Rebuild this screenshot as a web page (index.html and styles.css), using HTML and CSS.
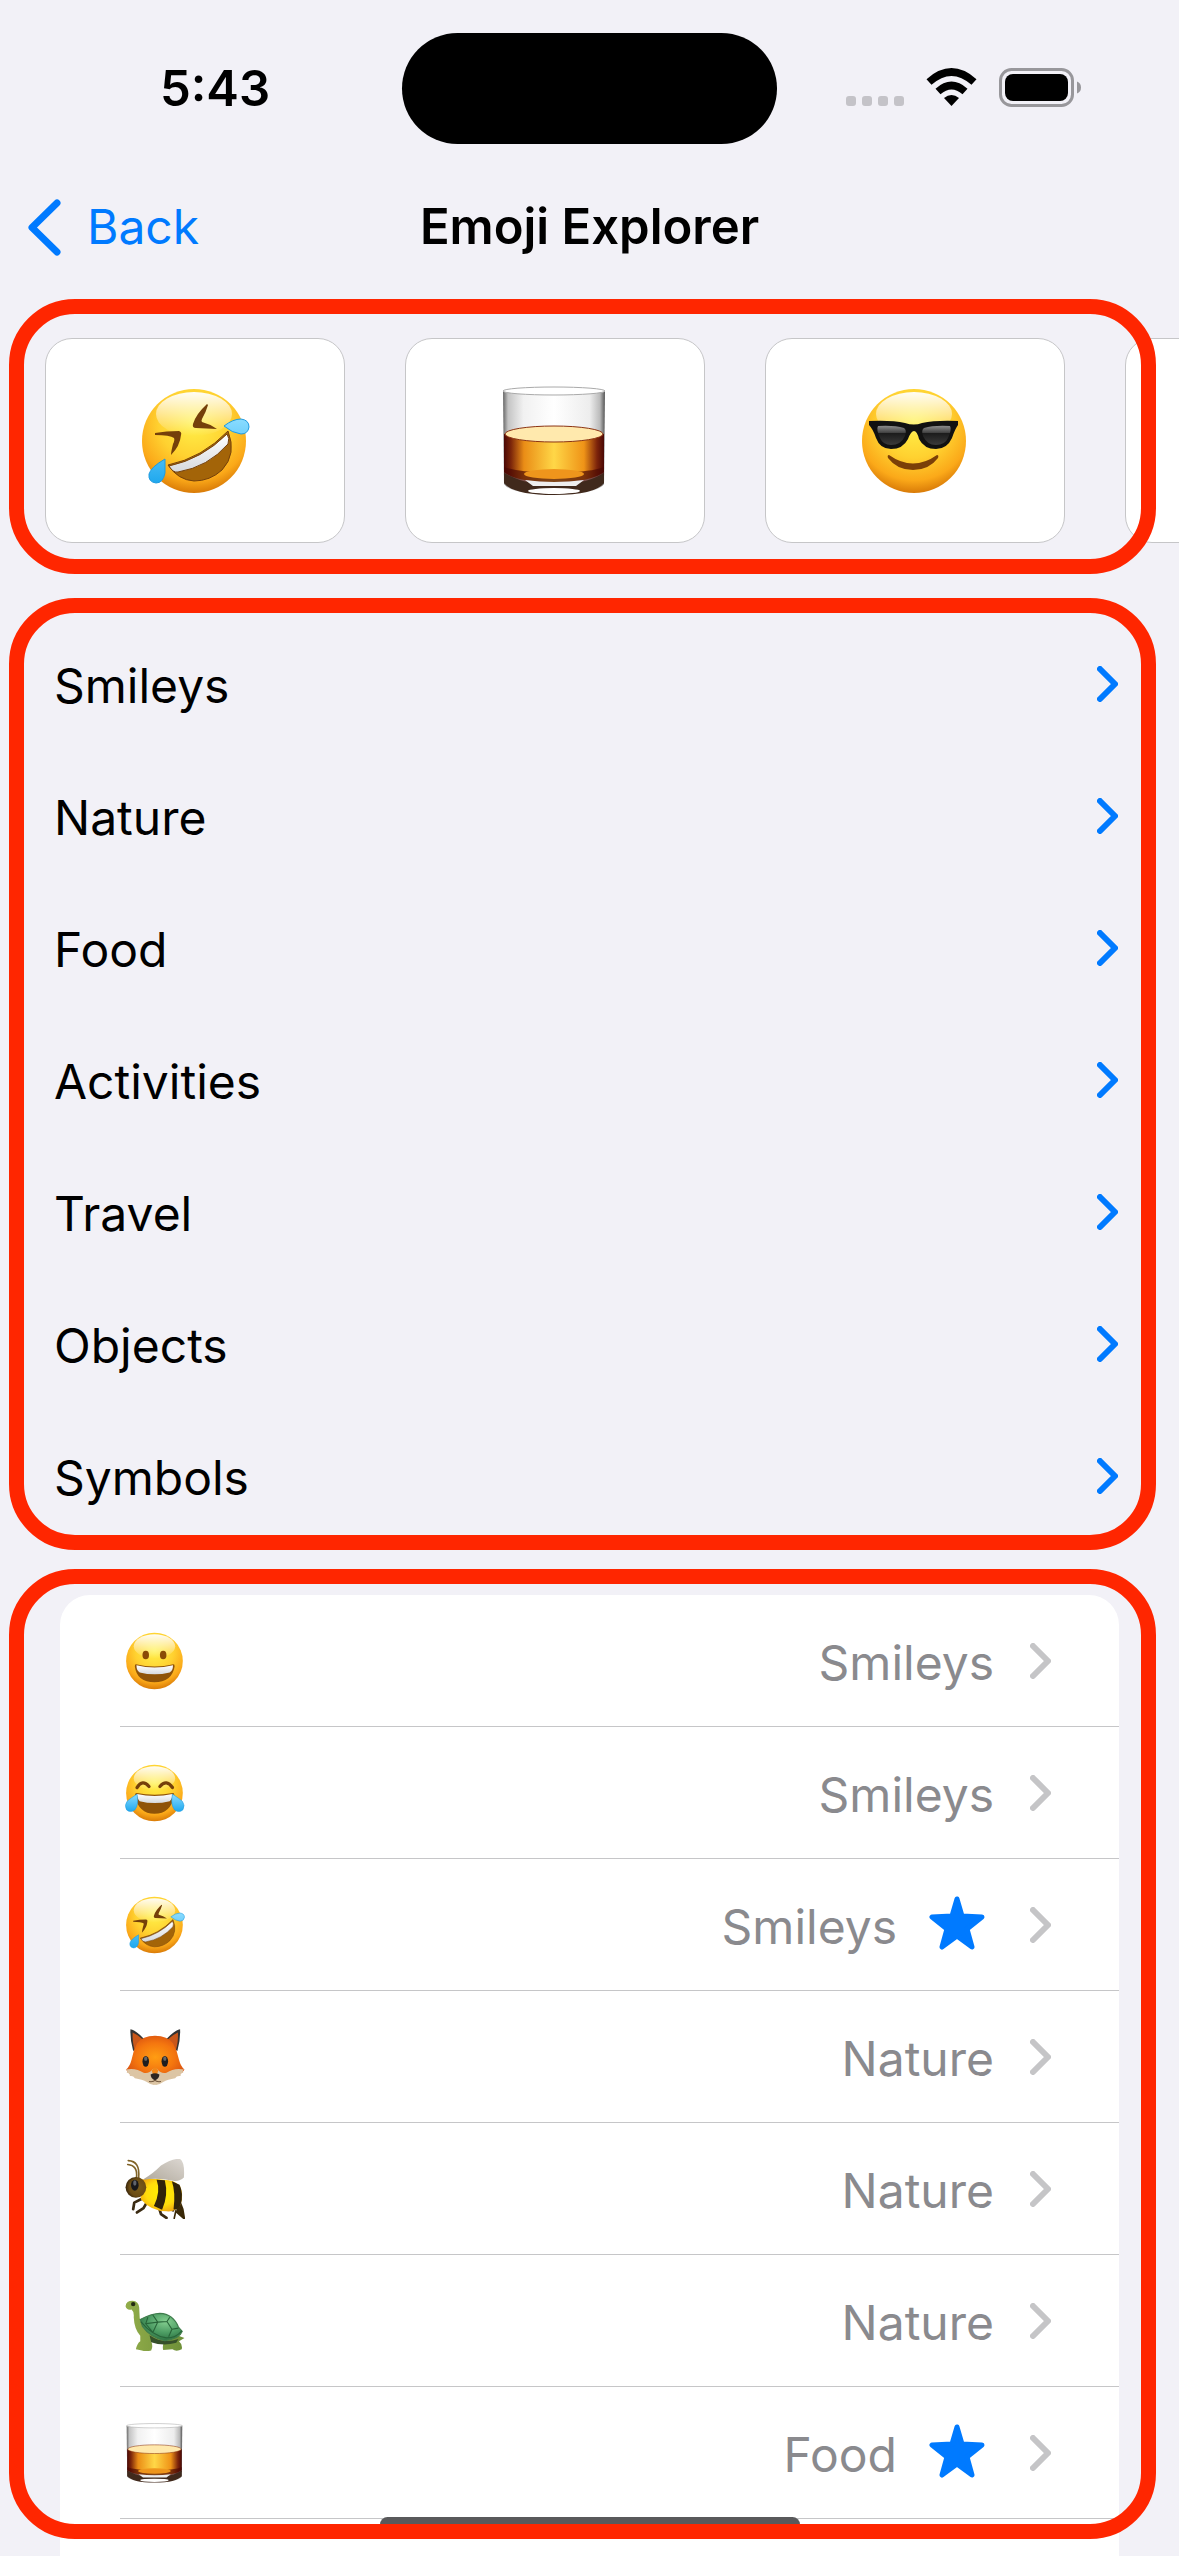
FILE: index.html
```html
<!DOCTYPE html>
<html lang="en">
<head>
<meta charset="utf-8">
<meta name="viewport" content="width=device-width">
<title>Emoji Explorer</title>
<link rel="stylesheet" href="styles.css">
</head>
<body>
<svg class="defs" aria-hidden="true">
  <defs>
    <radialGradient id="skin" cx="0.5" cy="0.32" r="0.68">
      <stop offset="0" stop-color="#fff24a"/><stop offset="0.5" stop-color="#ffd130"/><stop offset="0.82" stop-color="#fba919"/><stop offset="1" stop-color="#d97b08"/>
    </radialGradient>
    <linearGradient id="gloss" x1="0" y1="0" x2="0" y2="1">
      <stop offset="0" stop-color="#fff" stop-opacity="0.95"/><stop offset="1" stop-color="#fff" stop-opacity="0"/>
    </linearGradient>
    <linearGradient id="tear" x1="0" y1="0" x2="0" y2="1">
      <stop offset="0" stop-color="#8adcff"/><stop offset="1" stop-color="#1fa8ee"/>
    </linearGradient>
    <linearGradient id="teeth" x1="0" y1="0" x2="0" y2="1">
      <stop offset="0" stop-color="#fff"/><stop offset="1" stop-color="#d6d9de"/>
    </linearGradient>
    <linearGradient id="glass-wall">
      <stop offset="0" stop-color="#666"/><stop offset="0.05" stop-color="#c4c4c4"/><stop offset="0.2" stop-color="#f1f1f1"/><stop offset="0.5" stop-color="#fff"/><stop offset="0.85" stop-color="#ededed"/><stop offset="0.95" stop-color="#bbb"/><stop offset="1" stop-color="#555"/>
    </linearGradient>
    <linearGradient id="whisky">
      <stop offset="0" stop-color="#4a0805"/><stop offset="0.07" stop-color="#7c260a"/><stop offset="0.2" stop-color="#ea8d16"/><stop offset="0.5" stop-color="#ffd747"/><stop offset="0.8" stop-color="#ef9317"/><stop offset="0.93" stop-color="#7d240b"/><stop offset="1" stop-color="#4a0805"/>
    </linearGradient>
    <linearGradient id="lens" x1="0" y1="0" x2="0" y2="1">
      <stop offset="0" stop-color="#8d8d8d"/><stop offset="0.35" stop-color="#444"/><stop offset="0.4" stop-color="#1c1c1c"/><stop offset="1" stop-color="#3a3a3a"/>
    </linearGradient>
    <radialGradient id="fur" cx="0.5" cy="0.5" r="0.55">
      <stop offset="0" stop-color="#ff9d12"/><stop offset="0.6" stop-color="#f4760f"/><stop offset="1" stop-color="#dc5410"/>
    </radialGradient>
    <radialGradient id="bee-body" cx="0.5" cy="0.45" r="0.6">
      <stop offset="0" stop-color="#fff000"/><stop offset="0.6" stop-color="#ffdc0c"/><stop offset="1" stop-color="#f0a410"/>
    </radialGradient>
    <radialGradient id="bee-head" cx="0.6" cy="0.5" r="0.6">
      <stop offset="0" stop-color="#7a5c1a"/><stop offset="0.7" stop-color="#6b4c14"/><stop offset="1" stop-color="#34220a"/>
    </radialGradient>
    <linearGradient id="wing" x1="1" y1="0" x2="0" y2="1">
      <stop offset="0" stop-color="#d9d4ce"/><stop offset="1" stop-color="#aaa294"/>
    </linearGradient>
    <radialGradient id="shell" cx="0.6" cy="0.3" r="0.7">
      <stop offset="0" stop-color="#84cf90"/><stop offset="0.6" stop-color="#4b9b62"/><stop offset="1" stop-color="#2f7444"/>
    </radialGradient>
    <linearGradient id="turtle-skin" x1="0" y1="0" x2="1" y2="0">
      <stop offset="0" stop-color="#92ad4a"/><stop offset="1" stop-color="#6d8f38"/>
    </linearGradient>

    <symbol id="face" viewBox="0 0 110 110">
      <circle cx="54" cy="55" r="52" fill="url(#skin)"/>
      <ellipse cx="54" cy="28" rx="38" ry="22" fill="url(#gloss)"/>
    </symbol>

    <symbol id="grin" viewBox="0 0 110 110">
      <use href="#face"/>
      <ellipse cx="38" cy="44" rx="6" ry="8" fill="#8a4b06"/><ellipse cx="70" cy="44" rx="6" ry="8" fill="#8a4b06"/>
      <path d="M20 61Q54 69 89 61Q91 61 91 65Q86 94 54 94Q22 94 18 65Q18 61 20 61Z" fill="#8f5308"/>
      <path d="M21 63Q54 71 88 63Q88 73 82 76Q54 83 27 76Q21 73 21 63Z" fill="url(#teeth)"/>
    </symbol>

    <symbol id="joy" viewBox="0 0 110 110">
      <use href="#face"/>
      <path d="M22 45Q32 29 44 43M64 43Q76 29 87 45" fill="none" stroke="#75400a" stroke-width="6" stroke-linecap="round"/>
      <path d="M21 55Q54 61 88 55Q91 55 90 60Q84 93 54 93Q25 93 18 60Q18 55 21 55Z" fill="#8f5308"/>
      <path d="M22 57Q54 64 87 57Q87 66 82 70Q54 77 27 70Q22 66 22 57Z" fill="url(#teeth)"/>
      <path d="M22 57Q26 76 18 86Q10 92 3 86Q-2 77 4 70Q10 65 22 57ZM87 57Q83 76 91 86Q99 92 106 86Q111 77 105 70Q99 65 87 57Z" fill="url(#tear)" stroke="#1f9be0"/>
    </symbol>

    <symbol id="rofl" viewBox="0 0 110 110">
      <use href="#face"/>
      <path d="M67 18Q56 28 53 38Q52 42 56 42L77 43Q70 38 62 36Q61 35 62 33Q66 26 68 19ZM15 47Q26 45 39 45Q42 46 41 49Q40 60 31 69Q31 66 33 58Q35 54 34 52Q30 49 15 49Z" fill="#75400a"/>
      <path d="M28 79Q62 72 88 45Q97 68 82 84Q70 95 54 95Q38 94 28 79Z" fill="#a36408" stroke="#75400a"/>
      <path d="M29 80Q62 73 87 48Q90 52 88 58Q68 81 38 86Q33 87 29 80Z" fill="url(#teeth)" stroke="#75400a"/>
      <path d="M84 40Q93 33 101 33Q109 34 109 41Q108 48 101 48Q92 47 84 40ZM25 73Q11 81 9 88Q8 96 16 97Q23 97 25 87Z" fill="url(#tear)" stroke="#1f9be0"/>
    </symbol>

    <symbol id="cool" viewBox="0 0 110 110">
      <use href="#face"/>
      <path d="M9 35Q32 34 45 37Q54 40 62 37Q76 34 98 35L98 39Q95 43 92 52Q87 63 76 63Q64 63 59 53Q57 45 54 45Q51 45 48 53Q43 63 31 63Q20 63 16 52Q13 43 9 39Z" fill="#111"/>
      <path d="M18 40Q34 39 44 42Q47 44 45 50Q41 59 31 59Q23 59 20 52Q16 43 18 40ZM90 40Q74 39 64 42Q61 44 63 50Q67 59 76 59Q85 59 88 52Q92 43 90 40Z" fill="url(#lens)"/>
      <path d="M29 69Q53 86 77 69Q79 69 78 72Q69 84 53 84Q37 84 28 72Q27 69 29 69Z" fill="#7b3f08"/>
    </symbol>

    <symbol id="tumbler" viewBox="0 0 110 110">
      <path d="M3 5L4 98Q10 108 54 109Q98 108 104 98L105 5Z" fill="url(#glass-wall)"/>
      <path d="M4 48V86Q16 96 54 96Q92 96 104 86V48Z" fill="url(#whisky)"/>
      <path d="M4 81Q22 87 54 86Q88 87 104 81V90Q90 98 54 98Q18 98 4 90Z" fill="#4a0904" opacity="0.7"/>
      <ellipse cx="54" cy="88" rx="30" ry="5" fill="#ef951c"/>
      <path d="M4 87Q20 95 28 96Q54 100 80 96Q90 95 104 87V97Q95 109 54 109Q13 109 4 97Z" fill="#40291c"/>
      <path d="M25 94Q54 98 84 94L76 100H33Z" fill="#eee"/><ellipse cx="54" cy="105" rx="26" ry="3" fill="#fff"/>
      <ellipse cx="54" cy="48" rx="49" ry="8" fill="#ffe9ad" stroke="#8b3313" stroke-width="1"/>
      <ellipse cx="54" cy="5" rx="51" ry="4" fill="#fff" stroke="#aaa" stroke-width="1"/>
    </symbol>

    <symbol id="fox" viewBox="0 0 110 110">
      <path d="M10 4Q20 6 35 22Q30 36 15 44Q9 22 10 4ZM101 4Q91 6 76 22Q81 36 96 44Q102 22 101 4Z" fill="#333"/>
      <path d="M14 10Q24 14 34 24L18 44Q13 26 14 10ZM97 10Q87 14 77 24L93 44Q98 26 97 10Z" fill="#c9571a"/>
      <path d="M55 16Q78 16 88 30Q96 44 99 60Q102 72 109 78Q103 90 86 92Q70 96 55 94Q40 96 24 92Q7 90 2 78Q9 72 12 60Q15 44 22 30Q32 16 55 16Z" fill="url(#fur)"/>
      <path d="M1 78Q20 74 34 84Q45 86 50 78Q55 72 60 78Q65 86 76 84Q90 74 109 78Q104 80 107 84Q101 84 102 90Q94 89 92 94Q78 96 70 101Q62 107 55 106Q48 107 40 101Q32 96 18 94Q16 89 9 90Q9 84 3 84Q6 80 1 78Z" fill="#dcc5a4"/>
      <path d="M49 80Q55 68 61 80L58 88H52Z" fill="#f08718"/>
      <ellipse cx="38" cy="63" rx="6" ry="10" fill="#1d1d1f"/><ellipse cx="73" cy="63" rx="6" ry="10" fill="#1d1d1f"/>
      <ellipse cx="38" cy="58" rx="3" ry="4" fill="#666"/><ellipse cx="73" cy="58" rx="3" ry="4" fill="#666"/>
      <path d="M47 87Q55 83 63 87Q63 94 55 98Q47 94 47 87Z" fill="#2b2622"/>
      <path d="M44 100Q52 101 55 98Q58 101 66 100" fill="none" stroke="#70563c" stroke-width="2"/>
    </symbol>

    <symbol id="bee" viewBox="0 0 110 110">
      <path d="M99 74L106 92L109 110L93 96L90 110" fill="#3a2908" stroke="#3a2908" stroke-width="3"/>
      <path d="M31 73L17 80L15 92M42 76L34 90L22 98M62 88L66 101L76 108M78 90L88 94" fill="none" stroke="#3a2a12" stroke-width="5" stroke-linejoin="round" stroke-linecap="round"/>
      <path d="M28 38Q46 34 70 38Q92 38 101 50Q108 66 102 84Q92 98 76 96Q48 96 29 74Z" fill="url(#bee-body)"/>
      <path d="M58 38Q66 60 53 86L68 93Q80 66 73 39ZM86 41Q93 62 89 92Q97 95 102 84Q108 64 100 47Z" fill="#30230a"/>
      <path d="M35 36Q50 28 66 12Q88-2 101 0Q110 6 108 34Q100 42 88 40Q60 34 35 38Z" fill="url(#wing)" opacity="0.93"/>
      <path d="M21 34Q24 12 5 10M25 34Q28 4 6 3" fill="none" stroke="#806327" stroke-width="3" stroke-linecap="round"/>
      <circle cx="20" cy="52" r="19" fill="url(#bee-head)"/>
      <ellipse cx="18" cy="48" rx="7" ry="10" fill="#17171b"/><ellipse cx="18" cy="44" rx="3" ry="5" fill="#60636b"/>
    </symbol>

    <symbol id="turtle" viewBox="0 0 110 110">
      <path d="M1 28Q2 18 14 18Q25 19 26 30L27 50Q30 62 44 74L98 82L109 86L99 92Q106 98 104 107Q94 112 87 107L70 108Q68 100 72 92L48 92Q52 102 48 109Q38 112 31 109L20 107Q22 96 28 92V82Q17 70 16 48Q17 38 12 34Q3 36 1 28Z" fill="url(#turtle-skin)"/>
      <path d="M45 81Q70 98 98 88L94 95Q70 102 48 94Z" fill="#36502a"/>
      <path d="M28 52Q50 41 64 41Q88 42 98 66L105 74Q100 88 73 91Q46 85 32 65Z" fill="url(#shell)" stroke="#3f7c4c" stroke-width="2"/>
      <path d="M29 56Q50 82 76 86Q94 86 104 73M51 44L60 57L77 56L82 48M60 57L51 76M77 56L86 70L80 84M86 70L98 68M42 48L38 60M51 76L38 60L60 57" fill="none" stroke="#286539" stroke-width="2"/>
      <circle cx="15" cy="24" r="4" fill="#222a12"/>
    </symbol>

    <symbol id="chevron" viewBox="0 0 21 36">
      <path d="M3 3L18 18L3 33" fill="none" stroke="currentColor" stroke-width="6" stroke-linecap="round" stroke-linejoin="round"/>
    </symbol>
    <symbol id="star" viewBox="0 0 56 54">
      <path d="M28 3L33 20L53 21L38 33L43 51L28 40L13 51L18 33L3 21L23 20Z" fill="currentColor" stroke="currentColor" stroke-width="5" stroke-linejoin="round"/>
    </symbol>
  </defs>
</svg>

<div class="app">
  <div class="status">
    <time class="clock">5:43</time>
    <div class="island"></div>
    <div class="indicators">
      <svg width="58" height="39" viewBox="0 0 58 39" fill="#c4c3c8"><rect y="28" width="10" height="10" rx="3"/><rect x="16" y="28" width="10" height="10" rx="3"/><rect x="32" y="28" width="10" height="10" rx="3"/><rect x="48" y="28" width="10" height="10" rx="3"/></svg>
      <svg width="51" height="39" viewBox="0 0 51 39"><path d="M3 14Q25.500-6 48 14M12 23.500Q25.500 11.500 39 23.500" fill="none" stroke="#000" stroke-width="7.500"/><path d="M18 30Q25.500 24 33 30L25.500 38Z"/></svg>
      <svg width="82" height="39" viewBox="0 0 82 39"><rect x="1.500" y="1.500" width="72" height="36" rx="11" fill="none" stroke="#98979b" stroke-width="3"/><rect x="6" y="6" width="63" height="27" rx="8"/><path d="M78 13.500Q82 15 82 19.500Q82 24 78 25.500Z" fill="#98979b"/></svg>
    </div>
  </div>

  <header class="navbar">
    <a class="back" href="#back">
      <svg width="33" height="57" viewBox="0 0 33 57"><path d="M29 4L4 28.500L29 53" fill="none" stroke="currentColor" stroke-width="7" stroke-linecap="round" stroke-linejoin="round"/></svg>
      Back
    </a>
    <h1 class="title">Emoji Explorer</h1>
  </header>

  <main class="content">
    <section class="panel recents" aria-label="Recent">
      <ul class="cards">
        <li><a class="card" href="#rofl" aria-label="Rolling on the floor laughing"><svg class="emoji-large"><use href="#rofl"/></svg></a></li>
        <li><a class="card" href="#tumbler" aria-label="Tumbler glass"><svg class="emoji-large"><use href="#tumbler"/></svg></a></li>
        <li><a class="card" href="#cool" aria-label="Smiling face with sunglasses"><svg class="emoji-large"><use href="#cool"/></svg></a></li>
        <li><a class="card" href="#more" aria-label="More"></a></li>
      </ul>
    </section>

    <nav class="panel categories" aria-label="Categories">
      <a class="category" href="#smileys"><span class="label">Smileys</span><svg class="chevron"><use href="#chevron"/></svg></a>
      <a class="category" href="#nature"><span class="label">Nature</span><svg class="chevron"><use href="#chevron"/></svg></a>
      <a class="category" href="#food"><span class="label">Food</span><svg class="chevron"><use href="#chevron"/></svg></a>
      <a class="category" href="#activities"><span class="label">Activities</span><svg class="chevron"><use href="#chevron"/></svg></a>
      <a class="category" href="#travel"><span class="label">Travel</span><svg class="chevron"><use href="#chevron"/></svg></a>
      <a class="category" href="#objects"><span class="label">Objects</span><svg class="chevron"><use href="#chevron"/></svg></a>
      <a class="category" href="#symbols"><span class="label">Symbols</span><svg class="chevron"><use href="#chevron"/></svg></a>
    </nav>

    <section class="panel all" aria-label="All emoji">
      <ul class="list">
        <li><a class="row" href="#grin"><svg class="emoji"><use href="#grin"/></svg><span class="label kind">Smileys</span><svg class="chevron"><use href="#chevron"/></svg></a></li>
        <li><a class="row" href="#joy"><svg class="emoji"><use href="#joy"/></svg><span class="label kind">Smileys</span><svg class="chevron"><use href="#chevron"/></svg></a></li>
        <li><a class="row" href="#rofl"><svg class="emoji"><use href="#rofl"/></svg><span class="label kind">Smileys</span><svg class="star"><use href="#star"/></svg><svg class="chevron"><use href="#chevron"/></svg></a></li>
        <li><a class="row" href="#fox"><svg class="emoji"><use href="#fox"/></svg><span class="label kind">Nature</span><svg class="chevron"><use href="#chevron"/></svg></a></li>
        <li><a class="row" href="#bee"><svg class="emoji"><use href="#bee"/></svg><span class="label kind">Nature</span><svg class="chevron"><use href="#chevron"/></svg></a></li>
        <li><a class="row" href="#turtle"><svg class="emoji"><use href="#turtle"/></svg><span class="label kind">Nature</span><svg class="chevron"><use href="#chevron"/></svg></a></li>
        <li><a class="row" href="#tumbler"><svg class="emoji"><use href="#tumbler"/></svg><span class="label kind">Food</span><svg class="star"><use href="#star"/></svg><svg class="chevron"><use href="#chevron"/></svg></a></li>
      </ul>
      <div class="home-indicator"></div>
    </section>
  </main>
</div>
</body>
</html>
```

FILE: styles.css
```css
* {
  box-sizing: border-box;
}

body {
  margin: 0;
  background: #f2f1f7;
  color: #000;
  font-family: Inter, "Liberation Sans", sans-serif;
  font-size: 48px;
  line-height: 60px;
}

ul {
  margin: 0;
  padding: 0;
  list-style: none;
}

a {
  color: inherit;
  text-decoration: none;
}

svg {
  display: block;
  flex: none;
}

.defs {
  position: absolute;
  width: 0;
  height: 0;
}

.app {
  display: flex;
  flex-direction: column;
  min-height: 100vh;
  overflow: hidden;
}

/* Status bar */
.status {
  display: grid;
  grid-template-columns: 1fr 375px 1fr;
  align-items: center;
  padding: 33px 28px 18px;
}

.clock {
  font-size: 49px;
  font-weight: 600;
  text-align: center;
}

.island {
  height: 111px;
  border-radius: 56px;
  background: #000;
}

.indicators {
  display: flex;
  justify-content: center;
  gap: 22px;
  padding: 0 2px 2px 0;
}

/* Navigation bar */
.navbar {
  display: grid;
  grid-template-columns: 1fr auto 1fr;
  align-items: center;
  height: 132px;
  padding: 0 28px 2px;
}

.back {
  display: flex;
  align-items: center;
  gap: 26px;
  color: #007aff;
}

.title {
  margin: 0;
  font-size: 49px;
  font-weight: 600;
}

/* Outlined panels */
.content {
  display: flex;
  flex: 1;
  flex-direction: column;
  padding-top: 5px;
}

.panel {
  position: relative;
}

.panel::after {
  content: "";
  position: absolute;
  inset: 0 23px 0 9px;
  border: 15px solid #ff2600;
  border-radius: 66px;
  pointer-events: none;
}

.recents {
  padding: 39px 0 31px;
  margin-bottom: 24px;
}

.cards {
  display: flex;
  gap: 60px;
  padding-left: 45px;
  overflow: hidden;
}

.card {
  display: flex;
  align-items: center;
  justify-content: center;
  width: 300px;
  height: 205px;
  border: 1px solid #c6c6c8;
  border-radius: 27px;
  background: #fff;
}

.emoji-large {
  width: 110px;
  height: 110px;
}

.categories {
  padding: 20px 61px 8px 54px;
  margin-bottom: 19px;
}

.category {
  display: flex;
  align-items: center;
  justify-content: space-between;
  height: 132px;
}

.label {
  padding-top: 3px;
}

.chevron {
  width: 21px;
  height: 36px;
  color: #007aff;
}

.all {
  display: flex;
  flex: 1;
  flex-direction: column;
  padding: 26px 60px 0;
}

.all::after {
  bottom: 17px;
}

.list {
  flex: 1;
  padding: 0 0 37px 60px;
  border-radius: 30px 30px 0 0;
  background: #fff;
}

.row {
  display: flex;
  align-items: center;
  gap: 36px;
  height: 132px;
  padding: 1px 68px 0 5px;
  border-bottom: 1px solid #c6c6c8;
  color: #8a8a8e;
}

.row .chevron {
  color: #c5c5c7;
}

.emoji {
  width: 60px;
  height: 60px;
}

.kind {
  margin-left: auto;
}

.star {
  width: 56px;
  height: 54px;
  margin: 0 9px 4px -4px;
  color: #007aff;
}

.home-indicator {
  position: absolute;
  bottom: 24px;
  left: 50%;
  width: 420px;
  height: 15px;
  border-radius: 8px;
  background: #59595b;
  transform: translateX(-50%);
}
```
